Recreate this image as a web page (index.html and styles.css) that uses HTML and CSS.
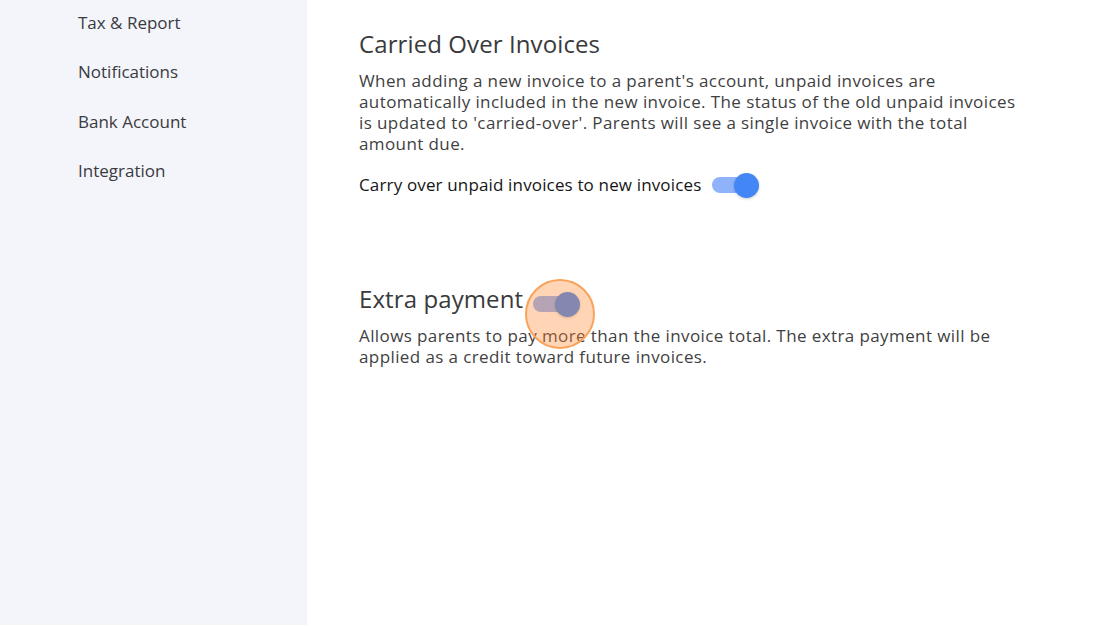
FILE: index.html
```html
<!DOCTYPE html>
<html lang="en">
<head>
  <meta charset="UTF-8">
  <meta name="viewport" content="width=device-width, initial-scale=1.0">
  <title>Invoice Settings</title>
  <link rel="stylesheet" href="styles.css">
</head>
<body>

  <div class="layout">
    <nav class="sidebar">
      <a class="nav-item">Tax &amp; Report</a>
      <a class="nav-item">Notifications</a>
      <a class="nav-item">Bank Account</a>
      <a class="nav-item">Integration</a>
    </nav>

    <main class="content">
      <section class="setting">
        <h2>Carried Over Invoices</h2>
        <p>When adding a new invoice to a parent's account, unpaid invoices are automatically included in the new invoice. The status of the old unpaid invoices is updated to 'carried-over'. Parents will see a single invoice with the total amount due.</p>
        <div class="toggle-row">
          <span class="toggle-label">Carry over unpaid invoices to new invoices</span>
          <span class="toggle on"><span class="knob"></span></span>
        </div>
      </section>

      <section class="setting extra">
        <div class="title-row">
          <h2>Extra payment</h2>
          <span class="toggle on"><span class="knob"></span><span class="click-mark"></span></span>
        </div>
        <p>Allows parents to pay more than the invoice total. The extra payment will be applied as a credit toward future invoices.</p>
      </section>
    </main>
  </div>

</body>
</html>
```

FILE: styles.css
```css
body { margin: 0; font-family: "Open Sans", "Liberation Sans", sans-serif; color: #3b3b3d; background: #fff; }
.layout { display: flex; height: 626px; overflow: hidden; }
.sidebar { width: 307px; flex-shrink: 0; background: #f4f5fa; display: flex; flex-direction: column; gap: 25.3px; padding: 11px 0 0 78px; box-sizing: border-box; height: 625px; }
.nav-item { font-size: 17px; line-height: 24px; color: #3a3b3f; cursor: pointer; }
.content { flex: 1; padding: 28px 0 0 52px; }
.setting h2 { margin: 0; font-size: 24px; font-weight: 400; line-height: 32px; letter-spacing: 0.1px; color: #3a3a3c; }
.setting p { margin: 10px 0 0; font-size: 17px; line-height: 21px; letter-spacing: 0.4px; color: #3f3f42; max-width: 662px; }
.toggle-row { display: flex; align-items: center; gap: 11px; margin-top: 19px; }
.toggle-label { font-size: 17px; letter-spacing: 0.15px; color: #151515; }
.toggle { position: relative; display: inline-block; width: 40px; height: 16px; border-radius: 8px; background: #8fb3fa; }
.toggle .knob { position: absolute; top: -4px; right: -7px; width: 25px; height: 25px; border-radius: 50%; background: #4287f5; box-shadow: 0 1px 3px rgba(0,0,0,0.2); }
.extra { margin-top: 87px; }
.title-row { display: flex; align-items: center; gap: 10px; }
.title-row .toggle { margin-top: 9px; }
.click-mark { position: absolute; left: -8px; top: -17px; width: 70px; height: 70px; box-sizing: border-box; border-radius: 50%; border: 2px solid #f8a35c; background: rgba(255, 135, 46, 0.35); }
.extra p { margin-top: 10px; }
```
